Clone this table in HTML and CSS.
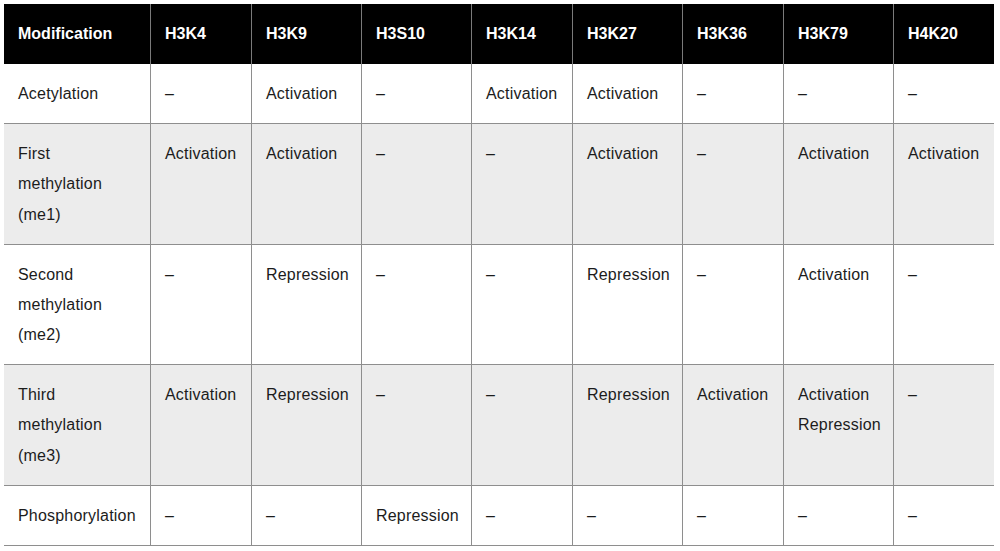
FILE: index.html
```html
<!DOCTYPE html>
<html lang="en">
<head>
<meta charset="utf-8">
<title>Histone modifications</title>
<link rel="stylesheet" href="styles.css">
</head>
<body>
<table class="mods">
  <colgroup>
    <col class="c-first">
    <col class="c-narrow">
    <col class="c-wide">
    <col class="c-wide">
    <col class="c-narrow">
    <col class="c-wide">
    <col class="c-narrow">
    <col class="c-wide">
    <col class="c-last">
  </colgroup>
  <thead>
    <tr>
      <th>Modification</th>
      <th>H3K4</th>
      <th>H3K9</th>
      <th>H3S10</th>
      <th>H3K14</th>
      <th>H3K27</th>
      <th>H3K36</th>
      <th>H3K79</th>
      <th>H4K20</th>
    </tr>
  </thead>
  <tbody>
    <tr>
      <td>Acetylation</td>
      <td>–</td>
      <td>Activation</td>
      <td>–</td>
      <td>Activation</td>
      <td>Activation</td>
      <td>–</td>
      <td>–</td>
      <td>–</td>
    </tr>
    <tr class="alt">
      <td>First<br>methylation<br>(me1)</td>
      <td>Activation</td>
      <td>Activation</td>
      <td>–</td>
      <td>–</td>
      <td>Activation</td>
      <td>–</td>
      <td>Activation</td>
      <td>Activation</td>
    </tr>
    <tr>
      <td>Second<br>methylation<br>(me2)</td>
      <td>–</td>
      <td>Repression</td>
      <td>–</td>
      <td>–</td>
      <td>Repression</td>
      <td>–</td>
      <td>Activation</td>
      <td>–</td>
    </tr>
    <tr class="alt">
      <td>Third<br>methylation<br>(me3)</td>
      <td>Activation</td>
      <td>Repression</td>
      <td>–</td>
      <td>–</td>
      <td>Repression</td>
      <td>Activation</td>
      <td>Activation<br>Repression</td>
      <td>–</td>
    </tr>
    <tr>
      <td>Phosphorylation</td>
      <td>–</td>
      <td>–</td>
      <td>Repression</td>
      <td>–</td>
      <td>–</td>
      <td>–</td>
      <td>–</td>
      <td>–</td>
    </tr>
  </tbody>
</table>
</body>
</html>
```

FILE: styles.css
```css
html, body {
  margin: 0;
  padding: 0;
  background: #ffffff;
}

body {
  padding: 4px;
  font-family: "Liberation Sans", Arial, sans-serif;
  color: #1c1c1c;
}

.mods {
  width: 990px;
  table-layout: fixed;
  border-collapse: separate;
  border-spacing: 0;
}

.c-first { width: 147px; }
.c-narrow { width: 101px; }
.c-wide { width: 110px; }
.c-last { width: 100px; }

.mods th,
.mods td {
  text-align: left;
  vertical-align: top;
  padding: 15px 10px 14px 14px;
  line-height: 30px;
  border-right: 1px solid #8e8e8e;
  white-space: nowrap;
}

.mods th:last-child,
.mods td:last-child {
  border-right: none;
}

.mods th {
  background: #000000;
  color: #ffffff;
  font-size: 16px;
  font-weight: bold;
  padding-bottom: 15px;
  border-right-color: #7a7a7a;
}

.mods td {
  font-size: 16px;
  line-height: 30.17px;
  letter-spacing: 0.2px;
  border-bottom: 1px solid #8e8e8e;
  background: #ffffff;
}

.mods tr.alt td {
  background: #ececec;
}
```
